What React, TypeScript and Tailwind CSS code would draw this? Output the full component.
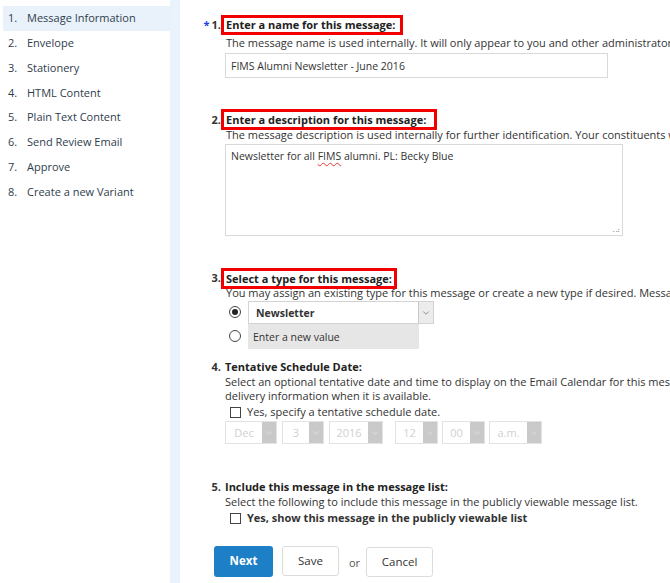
import { ChevronDown } from "lucide-react";

const steps = [
  "Message Information",
  "Envelope",
  "Stationery",
  "HTML Content",
  "Plain Text Content",
  "Send Review Email",
  "Approve",
  "Create a new Variant",
];

function DateSelect({ value, w }: { value: string; w: string }) {
  return (
    <div className={`flex h-[23px] border border-[#e3e3e3] bg-white ${w}`}>
      <div className="flex flex-1 items-center justify-center text-[11px] text-[#d0d0d0]">{value}</div>
      <div className="flex w-[14px] items-center justify-center bg-[#c9c9c9]">
        <ChevronDown size={10} strokeWidth={1.5} className="text-[#ececec]" />
      </div>
    </div>
  );
}

function Radio({ checked }: { checked?: boolean }) {
  return (
    <div className="flex h-[12px] w-[12px] items-center justify-center rounded-full border border-[#444] bg-white">
      {checked && <div className="h-[6px] w-[6px] rounded-full bg-[#222]" />}
    </div>
  );
}

function Checkbox() {
  return <div className="h-[11px] w-[11px] border border-[#444] bg-white" />;
}

export default function App() {
  return (
    <div
      className="flex h-[583px] w-[670px] overflow-hidden bg-white text-[#333]"
      style={{ fontFamily: '"Open Sans", "Liberation Sans", sans-serif' }}
    >
      {/* sidebar */}
      <aside className="w-[170px] shrink-0 pt-[6px]">
        {steps.map((s, i) => (
          <div
            key={s}
            className={
              i === 0
                ? "ml-[3px] flex h-[24.8px] items-center bg-[#e9f2fb] pl-[5px] text-[11px] text-[#2f3d4c]"
                : "flex h-[24.8px] items-center pl-[8px] text-[11px] text-[#2f3d4c]"
            }
          >
            <span className="w-[19px]">{i + 1}.</span>
            <span>{s}</span>
          </div>
        ))}
      </aside>
      <div className="w-[10px] shrink-0 bg-[#eaf3fc]" />

      {/* main */}
      <main className="flex-1 pl-[25px] text-[11px] leading-[14px]">
        {/* 1 */}
        <section className="mt-[15px] flex">
          <div className="flex w-[16px] shrink-0 items-start justify-end pt-[3px] text-[11px] font-bold">
            <span className="mr-[2px] text-[#1f3fdc]">*</span>
            <span>1.</span>
          </div>
          <div className="min-w-0 flex-1">
            <div className="inline-block h-[20px] whitespace-nowrap border-[3px] border-[#f20000] pl-[2px] pr-[5px] text-[11px] font-bold leading-[14px] text-[#222]">
              Enter a name for this message:
            </div>
            <div className="whitespace-nowrap pl-[5px] leading-[15px]">
              The message name is used internally. It will only appear to you and other administrators.
            </div>
            <div className="ml-[4px] mt-[3px] flex h-[25px] w-[383px] items-center border border-[#d9d9d9] pl-[5px] text-[10.5px]">
              FIMS Alumni Newsletter - June 2016
            </div>
          </div>
        </section>

        {/* 2 */}
        <section className="mt-[31px] flex">
          <div className="w-[16px] shrink-0 pt-[4px] text-right text-[11px] font-bold">2.</div>
          <div className="min-w-0 flex-1">
            <div className="inline-block h-[21px] whitespace-nowrap border-[3px] border-[#f20000] pl-[2px] pr-[8px] text-[11px] font-bold leading-[15px] text-[#222]">
              Enter a description for this message:
            </div>
            <div className="-mt-[3px] whitespace-nowrap pl-[5px] leading-[15px]">
              The message description is used internally for further identification. Your constituents will not see it.
            </div>
            <div className="relative ml-[4px] mt-[2px] h-[92px] w-[398px] border border-[#d9d9d9] px-[5px] pt-[4px] text-[10.5px]">
              Newsletter for all{" "}
              <span className="underline decoration-[#e33] decoration-wavy decoration-1 underline-offset-2">FIMS</span> alumni. PL: Becky Blue
              <span className="absolute bottom-[1px] right-[2px] text-[7px] leading-none text-[#999]">⠠⠴</span>
            </div>
          </div>
        </section>

        {/* 3 */}
        <section className="mt-[32px] flex">
          <div className="w-[16px] shrink-0 pt-[3px] text-right text-[11px] font-bold">3.</div>
          <div className="min-w-0 flex-1">
            <div className="inline-block h-[21px] whitespace-nowrap border-[3px] border-[#f20000] pl-[2px] pr-[2px] text-[11px] font-bold leading-[15px] text-[#222]">
              Select a type for this message:
            </div>
            <div className="-mt-[4px] whitespace-nowrap pl-[5px] leading-[15px]">
              You may assign an existing type for this message or create a new type if desired. Message types
            </div>
            <div className="mt-[1px] flex items-start">
              <div className="flex w-[27px] shrink-0 justify-center pl-[1px] pt-[5px]">
                <Radio checked />
              </div>
              <div className="flex h-[23px] w-[186px] border border-[#d3d3d3] bg-white">
                <div className="flex flex-1 items-center pl-[7px] text-[10.5px] font-bold text-[#333]">Newsletter</div>
                <div className="flex w-[15px] items-center justify-center border-l border-[#c8c8c8] bg-[#ececec]">
                  <ChevronDown size={10} strokeWidth={1.5} className="text-[#555]" />
                </div>
              </div>
            </div>
            <div className="flex items-start">
              <div className="flex w-[27px] shrink-0 justify-center pl-[1px] pt-[6px]">
                <Radio />
              </div>
              <div className="flex h-[25px] w-[171px] items-center bg-[#e6e6e6] pl-[5px] text-[10.5px]">Enter a new value</div>
            </div>
          </div>
        </section>

        {/* 4 */}
        <section className="mt-[10px] flex">
          <div className="w-[16px] shrink-0 text-right text-[11px] font-bold leading-[16px]">4.</div>
          <div className="min-w-0 flex-1 pl-[4px]">
            <div className="text-[11px] font-bold leading-[16px] text-[#222]">Tentative Schedule Date:</div>
            <div className="leading-[14px]">
              <div className="whitespace-nowrap">
                Select an optional tentative date and time to display on the Email Calendar for this message. Update
              </div>
              <div>delivery information when it is available.</div>
            </div>
            <div className="mt-[2px] flex items-center gap-[6px] pl-[5px] text-[11px]">
              <Checkbox />
              <span>Yes, specify a tentative schedule date.</span>
            </div>
            <div className="mt-[2px] flex">
              <DateSelect value="Dec" w="w-[52px]" />
              <div className="ml-[5px]" />
              <DateSelect value="3" w="w-[42px]" />
              <div className="ml-[5px]" />
              <DateSelect value="2016" w="w-[54px]" />
              <div className="ml-[12px]" />
              <DateSelect value="12" w="w-[43px]" />
              <div className="ml-[4px]" />
              <DateSelect value="00" w="w-[43px]" />
              <div className="ml-[4px]" />
              <DateSelect value="a.m." w="w-[53px]" />
            </div>
          </div>
        </section>

        {/* 5 */}
        <section className="mt-[35px] flex">
          <div className="w-[16px] shrink-0 text-right text-[11px] font-bold leading-[16px]">5.</div>
          <div className="min-w-0 flex-1 pl-[4px]">
            <div className="text-[11px] font-bold leading-[16px] text-[#222]">Include this message in the message list:</div>
            <div className="whitespace-nowrap leading-[14px]">
              Select the following to include this message in the publicly viewable message list.
            </div>
            <div className="mt-[2px] flex items-center gap-[6px] pl-[5px] text-[11px] font-bold">
              <Checkbox />
              <span>Yes, show this message in the publicly viewable list</span>
            </div>
          </div>
        </section>

        {/* buttons */}
        <div className="ml-[9px] mt-[20px] flex items-center">
          <button className="h-[31px] w-[59px] rounded-[3px] bg-[#1d7fc5] text-[11.5px] font-bold text-white">Next</button>
          <button className="ml-[9px] h-[30px] w-[57px] rounded-[3px] border border-[#dcdcdc] bg-white text-[11.5px] text-[#333]">
            Save
          </button>
          <span className="ml-[10px] mt-[3px] text-[11px] text-[#555]">or</span>
          <button className="ml-[6px] mt-[2px] h-[30px] w-[67px] rounded-[3px] border border-[#dcdcdc] bg-white text-[11.5px] text-[#333]">
            Cancel
          </button>
        </div>
      </main>
    </div>
  );
}
